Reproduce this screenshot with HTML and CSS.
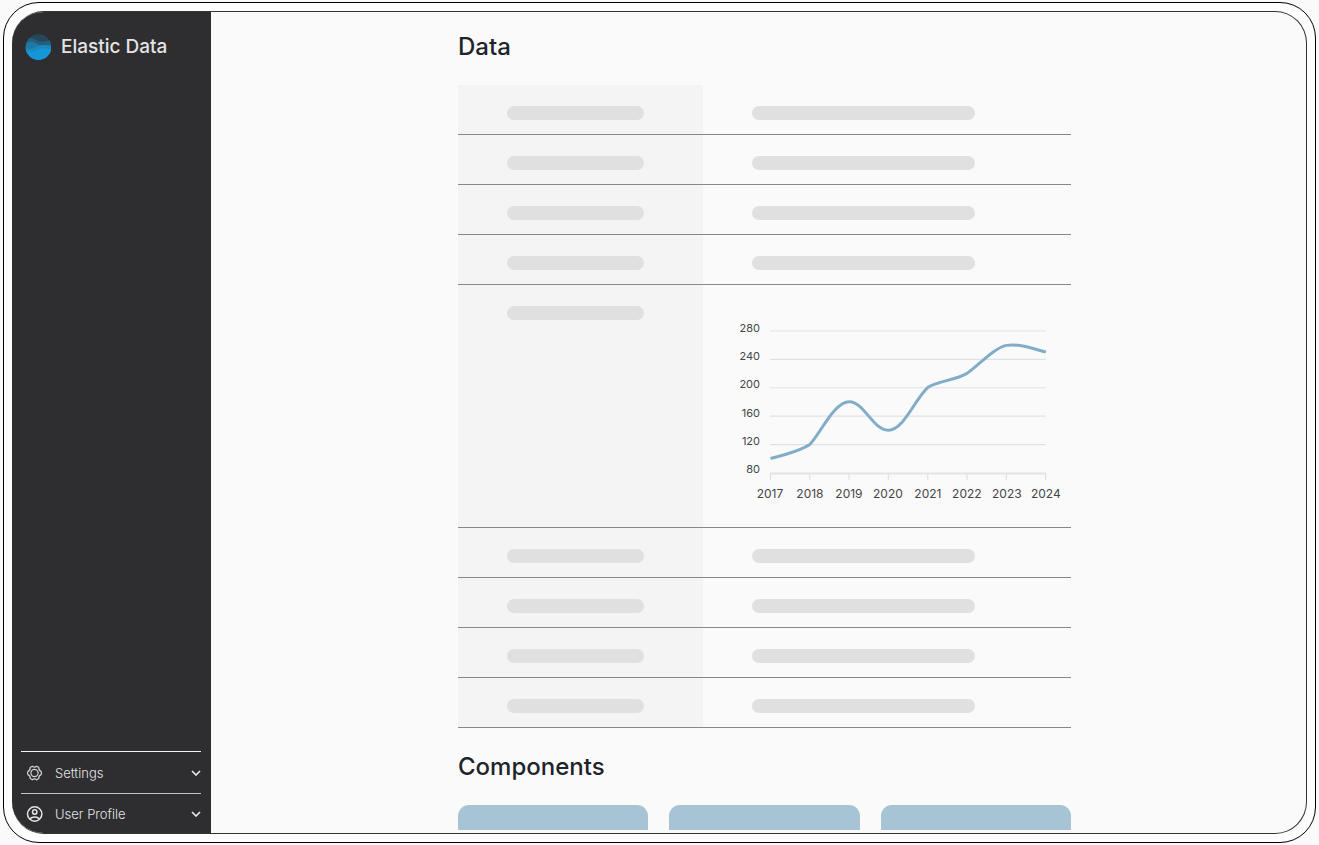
FILE: index.html
```html
<!DOCTYPE html>
<html lang="en">
<head>
<meta charset="utf-8">
<title>Elastic Data</title>
<link rel="stylesheet" href="styles.css">
</head>
<body>
<div class="frame">
  <div class="window">
    <aside class="sidebar">
      <div class="brand">
        <svg class="brand-logo" viewBox="0 0 26 26" aria-hidden="true">
          <defs><clipPath id="disc"><circle cx="13.500" cy="13" r="12.800"/></clipPath></defs>
          <g clip-path="url(#disc)">
            <rect width="27" height="26" fill="#28465a"/>
            <path d="M0 6C4 3 7 4 11 6S20 9 27 5V26H0Z" fill="#235f80"/>
            <path d="M0 10C4 7 7 7 11 9.500S20 13 27 10V26H0Z" fill="#1f78a4"/>
            <path d="M0 13C4 16 7 15 11 13S20 10 27 13V26H0Z" fill="#1b88be"/>
            <path d="M0 16C5 19 8 18 12 16S21 14 27 16V26H0Z" fill="#1597d7"/>
          </g>
        </svg>
        <span class="brand-name">Elastic Data</span>
      </div>
      <nav class="menu">
        <button class="menu-item" type="button">
          <svg class="menu-icon" viewBox="0 0 16 16" aria-hidden="true">
            <circle cx="7.500" cy="8" r="3.600"/>
            <path d="M5.300 1.300Q7.500 2.900 9.700 1.300L11.800 2.500Q11.500 5.200 14.100 6.400Q14.900 8 14.100 9.600Q11.500 10.800 11.800 13.500L9.700 14.700Q7.500 13.100 5.300 14.700L3.200 13.500Q3.500 10.800 0.900 9.600Q0.100 8 0.900 6.400Q3.500 5.200 3.200 2.500Z"/>
          </svg>
          <span class="menu-label">Settings</span>
          <svg class="chevron" viewBox="0 0 10 6" aria-hidden="true"><path d="M1 1L5 5L9 1"/></svg>
        </button>
        <button class="menu-item menu-item-last" type="button">
          <svg class="menu-icon menu-icon-bold" viewBox="0 0 16 16" aria-hidden="true">
            <circle cx="7.700" cy="8" r="7.200"/>
            <circle cx="7.700" cy="6" r="2.200"/>
            <path d="M2.900 13C5.200 10.200 10.200 10.200 12.500 13"/>
          </svg>
          <span class="menu-label">User Profile</span>
          <svg class="chevron" viewBox="0 0 10 6" aria-hidden="true"><path d="M1 1L5 5L9 1"/></svg>
        </button>
      </nav>
    </aside>
    <main class="content">
      <div class="column">
        <h1 class="heading">Data</h1>
        <table class="data">
          <tbody>
            <tr><th scope="row"><span class="bar"></span></th><td><span class="bar"></span></td></tr>
            <tr><th scope="row"><span class="bar"></span></th><td><span class="bar"></span></td></tr>
            <tr><th scope="row"><span class="bar"></span></th><td><span class="bar"></span></td></tr>
            <tr><th scope="row"><span class="bar"></span></th><td><span class="bar"></span></td></tr>
            <tr>
              <th scope="row"><span class="bar"></span></th>
              <td class="chart-cell">
                <svg class="chart" viewBox="0 0 330 190" role="img" aria-label="Values by year, 2017 to 2024">
                  <path class="grid" d="M35 16H311M35 44.400H311M35 72.800H311M35 101.200H311M35 129.600H311"/>
                  <path class="axis" d="M35 158.500H311"/>
                  <path class="ticks" d="M35.500 158V165M74.800 158V165M114.100 158V165M153.400 158V165M192.900 158V165M232.200 158V165M271.500 158V165M310.800 158V165"/>
                  <path class="series" d="M35.500 143.500C35.500 143.500 64 137 74.800 129.600C86 118 99 87 114.500 86.800C129 86.800 138 115.200 153.400 115.200C169 115.200 180 84 192.800 72.600C203 66 220 65.500 232.200 58.400C245 49.500 259 33 271.600 30.400C283 28.500 297 33 311 37.200"/>
                  <g class="y-labels">
                    <text x="25" y="17">280</text>
                    <text x="25" y="45">240</text>
                    <text x="25" y="73">200</text>
                    <text x="25" y="102">160</text>
                    <text x="25" y="130">120</text>
                    <text x="25" y="158">80</text>
                  </g>
                  <g class="x-labels">
                    <text x="35" y="183">2017</text>
                    <text x="75" y="183">2018</text>
                    <text x="114" y="183">2019</text>
                    <text x="153" y="183">2020</text>
                    <text x="193" y="183">2021</text>
                    <text x="232" y="183">2022</text>
                    <text x="272" y="183">2023</text>
                    <text x="311" y="183">2024</text>
                  </g>
                </svg>
              </td>
            </tr>
            <tr><th scope="row"><span class="bar"></span></th><td><span class="bar"></span></td></tr>
            <tr><th scope="row"><span class="bar"></span></th><td><span class="bar"></span></td></tr>
            <tr><th scope="row"><span class="bar"></span></th><td><span class="bar"></span></td></tr>
            <tr><th scope="row"><span class="bar"></span></th><td><span class="bar"></span></td></tr>
          </tbody>
        </table>
        <h2 class="heading heading-next">Components</h2>
        <div class="cards">
          <div class="card"></div>
          <div class="card"></div>
          <div class="card"></div>
        </div>
      </div>
    </main>
  </div>
</div>
</body>
</html>
```
FILE: styles.css
```css
* {
  box-sizing: border-box;
}

body {
  margin: 0;
  height: 100vh;
  padding: 2px 3px;
  background: #fafafa;
  font-family: Inter, "Liberation Sans", sans-serif;
  overflow: hidden;
}

.frame {
  height: 100%;
  padding: 8px;
  border: 1px solid #000;
  border-radius: 36px;
  background: #fdfdfd;
}

.window {
  display: flex;
  height: 100%;
  border: 1px solid #333;
  border-left: 0;
  border-radius: 32px;
  background: #fafafa;
  overflow: hidden;
}

.sidebar {
  display: flex;
  flex: none;
  flex-direction: column;
  justify-content: space-between;
  width: 199px;
  margin: -1px 0;
  padding: 0 10px 0 9px;
  background: #2e2e30;
}

.brand {
  display: flex;
  align-items: center;
  gap: 10px;
  padding: 23px 4px;
}

.brand-logo {
  width: 26px;
  height: 26px;
}

.brand-name {
  color: #e4e4e6;
  font-size: 19px;
  font-weight: 500;
  line-height: 26px;
}

.menu-item {
  display: flex;
  align-items: center;
  width: 100%;
  height: 42px;
  padding: 0 0 0 6px;
  border: 0;
  border-top: 1px solid #f4f4f4;
  background: none;
  color: #e4e4e6;
  font: 300 13px/20px Inter, "Liberation Sans", sans-serif;
  text-align: left;
}

.menu-item-last {
  height: 41px;
  border-top-color: #c4c4c6;
}

.menu-icon {
  width: 16px;
  height: 16px;
  margin-right: 12px;
  fill: none;
  stroke: #d2d2d4;
  stroke-width: 1.200;
  overflow: visible;
}

.menu-icon-bold {
  stroke: #e4e4e6;
  stroke-width: 1.500;
}

.menu-label {
  flex: 1;
}

.chevron {
  width: 10px;
  height: 6px;
  fill: none;
  stroke: #ececee;
  stroke-width: 1.600;
}

.content {
  flex: 1;
  min-width: 0;
  padding-left: 12px;
  margin-bottom: 3px;
  overflow: hidden;
}

.column {
  max-width: 613px;
  margin: 0 auto;
}

.heading {
  margin: 0;
  padding: 18px 0 22px;
  color: #202329;
  font-size: 24px;
  font-weight: 500;
  line-height: 33px;
}

.heading-next {
  padding-top: 22px;
}

.data {
  width: 100%;
  border-collapse: separate;
  border-spacing: 0;
  table-layout: fixed;
}

.data th,
.data td {
  padding: 21px 49px 14px;
  border-bottom: 1px solid #85878c;
  vertical-align: top;
}

.data th {
  width: 40%;
  background: #f4f4f4;
}

.bar {
  display: block;
  height: 14px;
  max-width: 223px;
  border-radius: 7px;
  background: #e0e0e0;
}

.data th .bar {
  max-width: 137px;
}

.data .chart-cell {
  padding: 30px 6px 22px 32px;
}

.chart {
  display: block;
  width: 100%;
  fill: none;
}

.grid,
.ticks {
  stroke: #e0e2e4;
  stroke-width: 1.200;
}

.axis {
  stroke: #e2e3e5;
  stroke-width: 2;
}

.series {
  stroke: #82adc7;
  stroke-width: 3;
}

.y-labels {
  fill: #444648;
  font-size: 11px;
  text-anchor: end;
}

.x-labels {
  fill: #444648;
  font-size: 12px;
  text-anchor: middle;
}

.cards {
  display: grid;
  grid-template-columns: repeat(3, 1fr);
  gap: 21px;
}

.card {
  height: 120px;
  border-radius: 11px;
  background: #a7c4d5;
}
```
